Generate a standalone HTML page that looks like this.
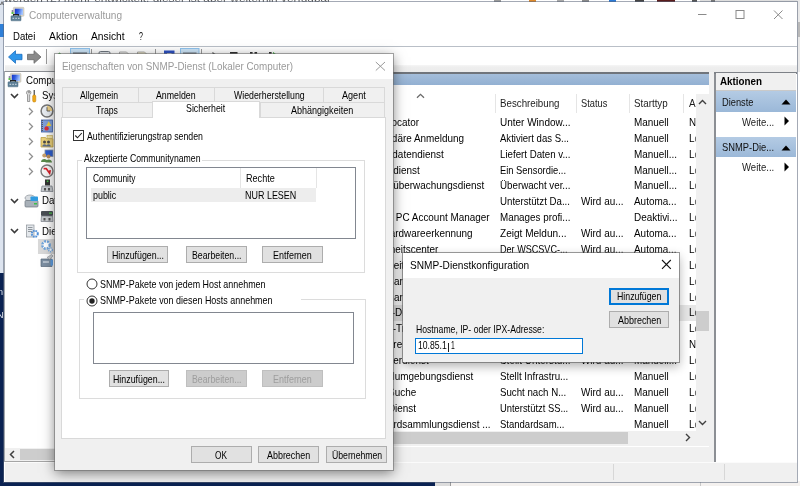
<!DOCTYPE html>
<html lang="de"><head><meta charset="utf-8"><title>Computerverwaltung</title>
<style>
html,body{margin:0;padding:0}
body{width:800px;height:486px;overflow:hidden;position:relative;background:#fff;font-family:"Liberation Sans",sans-serif}
body div{position:absolute}
#desk,#main,#dlg1,#dlg2{left:0;top:0;width:800px;height:486px;overflow:hidden;will-change:transform}
.a{position:absolute;overflow:visible}
.t{position:absolute;white-space:nowrap;line-height:normal}
.clip{overflow:hidden;transform:scaleX(.955);transform-origin:0 0}
</style></head>
<body>
<div id="desk">
<div style="left:0px;top:0px;width:800px;height:486px;background:#ffffff;"></div>
<div style="left:700px;top:0px;width:100px;height:3px;background:#dedede;"></div>
<div style="left:0px;top:0px;width:4px;height:273px;background:#dde4ef;"></div>
<div style="left:0px;top:24px;width:4px;height:13px;background:#2f7fd8;"></div>
<div style="left:0px;top:273px;width:4px;height:213px;background:#0a2252;"></div>
<div style="left:0px;top:481px;width:435px;height:5px;background:#0a2252;"></div>
<div style="left:435px;top:481px;width:15px;height:5px;background:#dcdcdc;"></div>
<div style="left:450px;top:481px;width:1px;height:5px;background:#9a9a9a;"></div>
<div style="left:451px;top:481px;width:349px;height:5px;background:#f4f1ef;"></div>
<div style="left:700px;top:481px;width:1px;height:5px;background:#c8c8c8;"></div>
<div style="left:797px;top:0px;width:3px;height:72px;background:#e9e9e9;"></div>
<div style="left:798px;top:22px;width:2px;height:15px;background:#b9b9b9;"></div>
<span class="t" style="top:-8.50px;font-size:11px;color:#5a5a5a;left:4.00px;transform-origin:0 0;transform:scaleX(1.0762);">werden (2) mehr entwickelt, dieser ist aber weiterhin verfügbar</span>
<div style="left:0px;top:1px;width:4px;height:4px;background:#555;clip-path:polygon(50% 0,100% 100%,70% 100%,50% 40%,30% 100%,0 100%);"></div>
<div style="left:494px;top:0px;width:7px;height:2px;background:#9a9a9a;"></div>
<div style="left:529px;top:0px;width:7px;height:2px;background:#e08a2a;"></div>
<div style="left:557px;top:0px;width:7px;height:2px;background:#a8a8a8;"></div>
<div style="left:582px;top:0px;width:7px;height:2px;background:#8a8a8a;"></div>
<div style="left:609px;top:0px;width:7px;height:2px;background:#2a7ad8;"></div>
<div style="left:635px;top:0px;width:9px;height:2px;background:#444;"></div>
<div style="left:657px;top:0px;width:18px;height:2px;background:#5a1c1c;"></div>
<div style="left:692px;top:0px;width:5px;height:2px;background:#555;"></div>
<div style="left:711px;top:0px;width:4px;height:2px;background:#777;"></div>
<span class="t" style="top:286.50px;font-size:9px;color:#e8ecf4;right:797.00px;transform-origin:100% 0;">Papierkorb n</span>
<span class="t" style="top:309.50px;font-size:9px;color:#e8ecf4;right:796.50px;transform-origin:100% 0;">Chrome N</span>
</div>
<div id="main">
<div style="left:4px;top:2px;width:793px;height:479.5px;background:#ffffff;box-shadow:0 0 0 1px rgba(90,100,120,.55);"></div>
<span class="t" style="top:9.80px;font-size:10.4px;color:#9b9b9b;left:29.00px;transform-origin:0 0;transform:scaleX(0.9700);">Computerverwaltung</span>
<svg class="a" style="left:9px;top:6px" width="16" height="16" viewBox="0 0 16 16"><defs><linearGradient id="g1" x1="0" y1="0" x2="1" y2="0.2"><stop offset="0" stop-color="#1533c4"/><stop offset=".45" stop-color="#2f5be0"/><stop offset="1" stop-color="#a4c6ff"/></linearGradient></defs><rect x="4.300" y="1.300" width="10.700" height="9" rx="1" fill="#d9d5ca" stroke="#bdb9ad" stroke-width=".5"/><rect x="5.800" y="2.700" width="8.200" height="6.200" fill="url(#g1)"/><rect x="2.700" y="4" width="1.600" height="2" fill="#8a86a0"/><rect x="2.500" y="6" width="2" height="2" fill="#58c048"/><path d="M4.600 10v-1.400h4.800v1.400" fill="none" stroke="#222" stroke-width="1.200"/><rect x="2" y="9.800" width="10" height="5" rx=".6" fill="#5f8198" stroke="#4a6a80" stroke-width=".5"/><path d="M3.500 12.300h1.600M6.300 12.300h1.600M9 12.300h1.600" stroke="#bccbd6" stroke-width="1.300"/></svg>
<svg class="a" style="left:690px;top:5px" width="100" height="20" viewBox="0 0 100 20"><g stroke="#8a8a8a" stroke-width="1" fill="none"><path d="M8 9.5h8.5"/><rect x="46" y="5.5" width="8" height="8"/><path d="M84 5.5l8.5 8.5M92.5 5.5l-8.5 8.5"/></g></svg>
<span class="t" style="top:30.80px;font-size:10.4px;color:#000;left:12.50px;transform-origin:0 0;transform:scaleX(0.9190);">Datei</span>
<span class="t" style="top:30.80px;font-size:10.4px;color:#000;left:48.50px;transform-origin:0 0;transform:scaleX(0.9969);">Aktion</span>
<span class="t" style="top:30.80px;font-size:10.4px;color:#000;left:91.20px;transform-origin:0 0;transform:scaleX(0.9860);">Ansicht</span>
<span class="t" style="top:30.80px;font-size:10.4px;color:#000;left:138.70px;transform-origin:0 0;transform:scaleX(0.6746);">?</span>
<div style="left:5px;top:46px;width:792px;height:1px;background:#b9bfc7;"></div>
<div style="left:5px;top:65px;width:792px;height:7px;background:linear-gradient(#f6f6f6,#eeeeee 30%,#ececec);"></div>
<svg class="a" style="left:5px;top:47px" width="300" height="18" viewBox="0 0 300 18">
<path d="M3.5 10l7-6.3v3.6h6.5v5.4h-6.5v3.6z" fill="#2f96ea" stroke="#1c6fc0" stroke-width=".8"/>
<path d="M36 10l-7-6.3v3.6h-6.5v5.4h6.5v3.6z" fill="#8a8a8a" stroke="#6a6a6a" stroke-width=".8"/>
<path d="M41.5 2v15" stroke="#9a9a9a"/>
<path d="M54.5 5.5l-3.5 3h7z" fill="#3aa53a"/><rect x="50" y="7" width="10" height="8" fill="#e9c86a"/>
<rect x="65.5" y="1.5" width="19" height="17" fill="#cce4f7" stroke="#8fc3ee"/><rect x="68" y="5.5" width="14" height="8" fill="#5a6470"/>
<path d="M86.5 2v15" stroke="#9a9a9a"/>
<rect x="94" y="4.5" width="11" height="9" rx="1.5" fill="#dfe3e8" stroke="#6f7780"/>
<path d="M114.5 5h7l3 3v8h-10z" fill="#f4f4f0" stroke="#9a9a9a" stroke-width=".8"/>
<path d="M132.500 5h7l3 3v8h-10z" fill="#f3eccc" stroke="#9a9a9a" stroke-width=".8"/>
<path d="M150.500 2v15" stroke="#9a9a9a"/>
<rect x="159" y="3.500" width="10.500" height="11" fill="#2d50c0"/><rect x="162" y="6" width="4.500" height="3" fill="#dfe8ff"/>
<rect x="175.500" y="1.500" width="18.500" height="17" fill="#cce4f7" stroke="#8fc3ee"/><rect x="178" y="5.500" width="13.500" height="8" fill="#6a7480"/>
<path d="M196.500 2v15" stroke="#9a9a9a"/>
<path d="M207.500 5v8l6-4z" fill="#333"/>
<rect x="225" y="5" width="7.500" height="7" fill="#333"/>
<rect x="245" y="5" width="2.600" height="7" fill="#333"/><rect x="249.500" y="5" width="2.600" height="7" fill="#333"/>
<rect x="264" y="5" width="2.600" height="7" fill="#333"/><path d="M268 5v7l5-3.500z" fill="#2ea52e"/>
</svg>
<div style="left:4px;top:71px;width:389px;height:1px;background:#8c8f94;"></div>
<div style="left:4px;top:71px;width:1px;height:391px;background:#a3a8ae;"></div>
<div style="left:38px;top:238.5px;width:20px;height:15px;background:#d9d9d9;"></div>
<span class="t" style="top:75.00px;font-size:10.4px;color:#000;left:25.80px;transform-origin:0 0;transform:scaleX(0.9300);">Computerverwaltung (Lokal)</span>
<span class="t" style="top:90.05px;font-size:10.4px;color:#000;left:41.80px;transform-origin:0 0;transform:scaleX(0.9300);">System</span>
<span class="t" style="top:195.40px;font-size:10.4px;color:#000;left:41.80px;transform-origin:0 0;transform:scaleX(0.9300);">Datenspeicher</span>
<span class="t" style="top:225.50px;font-size:10.4px;color:#000;left:41.80px;transform-origin:0 0;transform:scaleX(0.9300);">Dienste und Anwendungen</span>
<svg class="a" style="left:10px;top:92.95px" width="9" height="6" viewBox="0 0 9 6"><path d="M1 1l3.500 3.500l3.500-3.500" fill="none" stroke="#3a3a3a" stroke-width="1.600"/></svg>
<svg class="a" style="left:10px;top:198.3px" width="9" height="6" viewBox="0 0 9 6"><path d="M1 1l3.500 3.500l3.500-3.500" fill="none" stroke="#3a3a3a" stroke-width="1.600"/></svg>
<svg class="a" style="left:10px;top:228.4px" width="9" height="6" viewBox="0 0 9 6"><path d="M1 1l3.500 3.500l3.500-3.500" fill="none" stroke="#3a3a3a" stroke-width="1.600"/></svg>
<svg class="a" style="left:28px;top:107.2px" width="6" height="9" viewBox="0 0 6 9"><path d="M1 1l3.500 3.500l-3.500 3.500" fill="none" stroke="#8f8f8f" stroke-width="1.300"/></svg>
<svg class="a" style="left:28px;top:122.25000000000001px" width="6" height="9" viewBox="0 0 6 9"><path d="M1 1l3.500 3.500l-3.500 3.500" fill="none" stroke="#8f8f8f" stroke-width="1.300"/></svg>
<svg class="a" style="left:28px;top:137.29999999999998px" width="6" height="9" viewBox="0 0 6 9"><path d="M1 1l3.500 3.500l-3.500 3.500" fill="none" stroke="#8f8f8f" stroke-width="1.300"/></svg>
<svg class="a" style="left:28px;top:152.35px" width="6" height="9" viewBox="0 0 6 9"><path d="M1 1l3.500 3.500l-3.500 3.500" fill="none" stroke="#8f8f8f" stroke-width="1.300"/></svg>
<svg class="a" style="left:28px;top:167.4px" width="6" height="9" viewBox="0 0 6 9"><path d="M1 1l3.500 3.500l-3.500 3.500" fill="none" stroke="#8f8f8f" stroke-width="1.300"/></svg>
<svg class="a" style="left:6px;top:72px" width="16" height="16" viewBox="0 0 16 16"><defs><linearGradient id="g2" x1="0" y1="0" x2="1" y2="0.2"><stop offset="0" stop-color="#1533c4"/><stop offset=".45" stop-color="#2f5be0"/><stop offset="1" stop-color="#a4c6ff"/></linearGradient></defs><rect x="4.300" y="1.300" width="10.700" height="9" rx="1" fill="#d9d5ca" stroke="#bdb9ad" stroke-width=".5"/><rect x="5.800" y="2.700" width="8.200" height="6.200" fill="url(#g2)"/><rect x="2.700" y="4" width="1.600" height="2" fill="#8a86a0"/><rect x="2.500" y="6" width="2" height="2" fill="#58c048"/><path d="M4.600 10v-1.400h4.800v1.400" fill="none" stroke="#222" stroke-width="1.200"/><rect x="2" y="9.800" width="10" height="5" rx=".6" fill="#5f8198" stroke="#4a6a80" stroke-width=".5"/><path d="M3.500 12.300h1.600M6.300 12.300h1.600M9 12.300h1.600" stroke="#bccbd6" stroke-width="1.300"/></svg>
<svg class="a" style="left:25px;top:88.5px" width="14" height="14" viewBox="0 0 14 14"><path d="M3.500 1.500a2.300 2.300 0 0 0-1 4.200v6.800h2.200v-6.800a2.300 2.300 0 0 0-.2-4.200v2.200h-1z" fill="#d8d8d8" stroke="#777" stroke-width=".7"/><rect x="8.600" y="1" width="1.300" height="5" fill="#555"/><rect x="7.700" y="6" width="3.100" height="7" rx="1.200" fill="#f0a818" stroke="#b87a08" stroke-width=".5"/></svg>
<svg class="a" style="left:40px;top:103.5px" width="14" height="14" viewBox="0 0 14 14"><circle cx="7" cy="7" r="5.900" fill="#e9edf2" stroke="#757575" stroke-width="1.500"/><path d="M7 7V1.800A5.200 5.200 0 0 1 12.200 7z" fill="#f1d38a"/><path d="M7 3.200V7h3" fill="none" stroke="#555" stroke-width=".9"/></svg>
<svg class="a" style="left:40px;top:118.6px" width="14" height="14" viewBox="0 0 14 14"><rect x="1.500" y="1" width="11" height="12" fill="#7f9fdc" stroke="#3f5fa8" stroke-width=".8"/><path d="M2.300 1v12" stroke="#555" stroke-width="1.200" stroke-dasharray="1 1"/><path d="M8.800 2.300l2.600 4.600h-5.200z" fill="#f3d23a"/><circle cx="6.600" cy="9.400" r="2.200" fill="#d8303a"/></svg>
<svg class="a" style="left:40px;top:133.6px" width="14" height="14" viewBox="0 0 14 14"><path d="M1 3.500h4.500l1 1.200h6.500v8.300h-12z" fill="#ecd27a" stroke="#b79a3a" stroke-width=".7"/><rect x="7" y="1.500" width="5.500" height="3" fill="#f6e7a8" stroke="#b79a3a" stroke-width=".5"/><circle cx="4.500" cy="8" r="1.500" fill="#4a4a4a"/><circle cx="8.500" cy="8" r="1.500" fill="#4a4a4a"/><path d="M2.300 12.500c0-3 4.400-3 4.400 0zM6.300 12.500c0-3 4.400-3 4.400 0z" fill="#5d6f8c"/></svg>
<svg class="a" style="left:40px;top:148.7px" width="14" height="14" viewBox="0 0 14 14"><rect x="5" y="1" width="8" height="6.500" fill="#2f5fd0" stroke="#8a96a8" stroke-width=".8"/><circle cx="4.300" cy="6.500" r="2" fill="#caa06a"/><circle cx="8.500" cy="7.500" r="2" fill="#b98d5c"/><path d="M1 13c0-4 6.500-4 6.500 0zM5.500 13.500c0-4 6.500-4 6.500 0z" fill="#5a8a4a"/></svg>
<svg class="a" style="left:40px;top:163.7px" width="14" height="14" viewBox="0 0 14 14"><circle cx="7" cy="7" r="6" fill="#f7f7f7" stroke="#7c7c7c" stroke-width="1.400"/><path d="M3.600 4.600h2.600l3.400 4.600l.6-3" fill="none" stroke="#d8202a" stroke-width="1.700"/></svg>
<svg class="a" style="left:40px;top:178.8px" width="14" height="14" viewBox="0 0 14 14"><rect x="5" y=".500" width="5" height="6" fill="#333"/><rect x="6.800" y="1.500" width="1.600" height="1.600" fill="#4cc04c"/><path d="M2 7h10l1 5.500h-12z" fill="#c8ccd0" stroke="#7a8088" stroke-width=".7"/><rect x="4" y="9" width="2" height="2.500" fill="#555"/><rect x="8" y="9" width="2" height="2.500" fill="#555"/></svg>
<svg class="a" style="left:24px;top:193.8px" width="15" height="14" viewBox="0 0 15 14"><ellipse cx="6" cy="4" rx="5" ry="3" fill="#d8dce0" stroke="#8a9098" stroke-width=".7"/><rect x="1" y="6.500" width="13" height="6.500" rx="1" fill="#a8b0b8" stroke="#6f7780" stroke-width=".7"/><rect x="6.500" y="2.500" width="7.500" height="4.500" rx=".8" fill="#2f9be0"/><rect x="10" y="9" width="3" height="1.500" fill="#3ac04a"/></svg>
<svg class="a" style="left:40px;top:208.9px" width="14" height="14" viewBox="0 0 14 14"><rect x="1" y="2" width="12" height="5" rx="1" fill="#4a4f55"/><rect x="9" y="3.500" width="3" height="1.300" fill="#4cc04c"/><path d="M1.500 7h11l.5 5.500h-12z" fill="#c8ccd0" stroke="#7a8088" stroke-width=".7"/><rect x="3.500" y="9" width="2" height="2.500" fill="#555"/><rect x="8.500" y="9" width="2" height="2.500" fill="#555"/></svg>
<svg class="a" style="left:25px;top:223.9px" width="14" height="14" viewBox="0 0 14 14"><rect x="1.500" y="1" width="7.500" height="12" fill="#e4e8ec" stroke="#8a9098" stroke-width=".7"/><path d="M3 3.500h4.500M3 5.500h4.500M3 7.500h4.500" stroke="#7a8088" stroke-width=".8"/><circle cx="9.800" cy="9.800" r="3" fill="none" stroke="#4f8fd8" stroke-width="2" stroke-dasharray="1.600 .8"/></svg>
<svg class="a" style="left:40px;top:239.0px" width="14" height="14" viewBox="0 0 14 14"><circle cx="6" cy="6" r="3.700" fill="#fff" stroke="#6fa4dc" stroke-width="2.400" stroke-dasharray="2 1"/><circle cx="10.500" cy="10.800" r="1.800" fill="#fff" stroke="#7fb0e4" stroke-width="1.600" stroke-dasharray="1.200 .7"/></svg>
<svg class="a" style="left:40px;top:254.0px" width="14" height="14" viewBox="0 0 14 14"><path d="M1 5h11v7.500h-11z" fill="#7d8fa2" stroke="#56677a" stroke-width=".7"/><path d="M3 8h6" stroke="#d8e0e8" stroke-width="1.200"/><path d="M7 3.500l4.500-3 1.500 1.500-3.500 3.500z" fill="#c8ccd0" stroke="#7a8088" stroke-width=".5"/><path d="M10.500 5.500h2.500v5l-1.250 2-1.250-2z" fill="#5f9fe4"/></svg>
<div style="left:5px;top:448px;width:388px;height:13px;background:#f0f0f0;"></div>
<div style="left:20px;top:449px;width:373px;height:11px;background:#cdcdcd;"></div>
<svg class="a" style="left:8px;top:450px" width="8" height="9" viewBox="0 0 8 9"><path d="M6 1l-3.500 3.500l3.500 3.500" fill="none" stroke="#404040" stroke-width="1.500"/></svg>
<div style="left:5px;top:461px;width:388px;height:1px;background:#a5a5a5;"></div>
<div style="left:393px;top:72px;width:316px;height:1.5px;background:#70757c;"></div>
<div style="left:393px;top:73.5px;width:316px;height:11.5px;background:linear-gradient(#a4bedb,#93b0d2);"></div>
<div style="left:709px;top:72px;width:5px;height:390px;background:#f0f0f0;"></div>
<div style="left:494.5px;top:94px;width:1px;height:19px;background:#e5e5e5;"></div>
<div style="left:575.5px;top:94px;width:1px;height:19px;background:#e5e5e5;"></div>
<div style="left:628.5px;top:94px;width:1px;height:19px;background:#e5e5e5;"></div>
<div style="left:683px;top:94px;width:1px;height:19px;background:#e5e5e5;"></div>
<svg class="a" style="left:416px;top:93px" width="9" height="6" viewBox="0 0 9 6"><path d="M1 4.800l3.500-3.500l3.500 3.500" fill="none" stroke="#6a6a6a" stroke-width="1.300"/></svg>
<span class="t" style="top:97.90px;font-size:10.4px;color:#1c1c1c;left:500.00px;transform-origin:0 0;transform:scaleX(0.9363);">Beschreibung</span>
<span class="t" style="top:97.90px;font-size:10.4px;color:#1c1c1c;left:581.20px;transform-origin:0 0;transform:scaleX(0.8925);">Status</span>
<span class="t" style="top:97.90px;font-size:10.4px;color:#1c1c1c;left:633.80px;transform-origin:0 0;transform:scaleX(0.9410);">Starttyp</span>
<span class="t" style="top:97.90px;font-size:10.4px;color:#1c1c1c;left:688.80px;transform-origin:0 0;transform:scaleX(0.9550);">A</span>
<div style="left:393px;top:305.14px;width:303px;height:15.8px;background:#e6e6e6;"></div>
<span class="t" style="top:117.00px;font-size:10.4px;color:#000;right:381.00px;transform-origin:100% 0;transform:scaleX(0.9550);">RPC-Locator</span>
<span class="t" style="top:117.00px;font-size:10.4px;color:#000;left:500.00px;transform-origin:0 0;transform:scaleX(0.9612);">Unter Window...</span>
<span class="t" style="top:117.00px;font-size:10.4px;color:#000;left:633.80px;transform-origin:0 0;transform:scaleX(0.9550);">Manuell</span>
<span class="t clip" style="left:689px;top:117.00px;width:7px;font-size:10.4px">Ne</span>
<span class="t" style="top:132.87px;font-size:10.4px;color:#000;right:336.00px;transform-origin:100% 0;transform:scaleX(0.9550);">Sekundäre Anmeldung</span>
<span class="t" style="top:132.87px;font-size:10.4px;color:#000;left:500.00px;transform-origin:0 0;transform:scaleX(0.9190);">Aktiviert das S...</span>
<span class="t" style="top:132.87px;font-size:10.4px;color:#000;left:633.80px;transform-origin:0 0;transform:scaleX(0.9550);">Manuell</span>
<span class="t clip" style="left:689px;top:132.87px;width:7px;font-size:10.4px">Lo</span>
<span class="t" style="top:148.74px;font-size:10.4px;color:#000;right:356.00px;transform-origin:100% 0;transform:scaleX(0.9550);">Sensordatendienst</span>
<span class="t" style="top:148.74px;font-size:10.4px;color:#000;left:500.00px;transform-origin:0 0;transform:scaleX(0.9342);">Liefert Daten v...</span>
<span class="t" style="top:148.74px;font-size:10.4px;color:#000;left:633.80px;transform-origin:0 0;transform:scaleX(0.9550);">Manuell...</span>
<span class="t clip" style="left:689px;top:148.74px;width:7px;font-size:10.4px">Lo</span>
<span class="t" style="top:164.61px;font-size:10.4px;color:#000;right:380.70px;transform-origin:100% 0;transform:scaleX(0.9550);">Sensordienst</span>
<span class="t" style="top:164.61px;font-size:10.4px;color:#000;left:500.00px;transform-origin:0 0;transform:scaleX(0.8997);">Ein Sensordie...</span>
<span class="t" style="top:164.61px;font-size:10.4px;color:#000;left:633.80px;transform-origin:0 0;transform:scaleX(0.9550);">Manuell...</span>
<span class="t clip" style="left:689px;top:164.61px;width:7px;font-size:10.4px">Lo</span>
<span class="t" style="top:180.48px;font-size:10.4px;color:#000;right:316.00px;transform-origin:100% 0;transform:scaleX(0.9550);">Sensorüberwachungsdienst</span>
<span class="t" style="top:180.48px;font-size:10.4px;color:#000;left:500.00px;transform-origin:0 0;transform:scaleX(0.9390);">Überwacht ver...</span>
<span class="t" style="top:180.48px;font-size:10.4px;color:#000;left:633.80px;transform-origin:0 0;transform:scaleX(0.9550);">Manuell...</span>
<span class="t clip" style="left:689px;top:180.48px;width:7px;font-size:10.4px">Lo</span>
<span class="t" style="top:196.35px;font-size:10.4px;color:#000;right:408.00px;transform-origin:100% 0;transform:scaleX(0.9550);">Server</span>
<span class="t" style="top:196.35px;font-size:10.4px;color:#000;left:500.00px;transform-origin:0 0;transform:scaleX(0.9324);">Unterstützt Da...</span>
<span class="t" style="top:196.35px;font-size:10.4px;color:#000;left:581.20px;transform-origin:0 0;transform:scaleX(0.9550);">Wird au...</span>
<span class="t" style="top:196.35px;font-size:10.4px;color:#000;left:633.80px;transform-origin:0 0;transform:scaleX(0.9550);">Automa...</span>
<span class="t clip" style="left:689px;top:196.35px;width:7px;font-size:10.4px">Lo</span>
<span class="t" style="top:212.22px;font-size:10.4px;color:#000;right:310.00px;transform-origin:100% 0;transform:scaleX(0.9550);">Shared PC Account Manager</span>
<span class="t" style="top:212.22px;font-size:10.4px;color:#000;left:500.00px;transform-origin:0 0;transform:scaleX(0.9461);">Manages profi...</span>
<span class="t" style="top:212.22px;font-size:10.4px;color:#000;left:633.80px;transform-origin:0 0;transform:scaleX(0.9550);">Deaktivi...</span>
<span class="t clip" style="left:689px;top:212.22px;width:7px;font-size:10.4px">Lo</span>
<span class="t" style="top:228.09px;font-size:10.4px;color:#000;right:327.60px;transform-origin:100% 0;transform:scaleX(0.9550);">Shellhardwareerkennung</span>
<span class="t" style="top:228.09px;font-size:10.4px;color:#000;left:500.00px;transform-origin:0 0;transform:scaleX(0.9675);">Zeigt Meldun...</span>
<span class="t" style="top:228.09px;font-size:10.4px;color:#000;left:581.20px;transform-origin:0 0;transform:scaleX(0.9550);">Wird au...</span>
<span class="t" style="top:228.09px;font-size:10.4px;color:#000;left:633.80px;transform-origin:0 0;transform:scaleX(0.9550);">Automa...</span>
<span class="t clip" style="left:689px;top:228.09px;width:7px;font-size:10.4px">Lo</span>
<span class="t" style="top:243.96px;font-size:10.4px;color:#000;right:361.50px;transform-origin:100% 0;transform:scaleX(0.9550);">Sicherheitscenter</span>
<span class="t" style="top:243.96px;font-size:10.4px;color:#000;left:500.00px;transform-origin:0 0;transform:scaleX(0.8726);">Der WSCSVC-...</span>
<span class="t" style="top:243.96px;font-size:10.4px;color:#000;left:581.20px;transform-origin:0 0;transform:scaleX(0.9550);">Wird au...</span>
<span class="t" style="top:243.96px;font-size:10.4px;color:#000;left:633.80px;transform-origin:0 0;transform:scaleX(0.9550);">Automa...</span>
<span class="t clip" style="left:689px;top:243.96px;width:7px;font-size:10.4px">Lo</span>
<span class="t" style="top:259.83px;font-size:10.4px;color:#000;left:359.75px;transform-origin:0 0;transform:scaleX(0.9550);">Sicherheitskonto-Manager</span>
<span class="t" style="top:259.83px;font-size:10.4px;color:#000;left:500.00px;transform-origin:0 0;transform:scaleX(0.9550);">Beim Start die...</span>
<span class="t" style="top:259.83px;font-size:10.4px;color:#000;left:581.20px;transform-origin:0 0;transform:scaleX(0.9550);">Wird au...</span>
<span class="t" style="top:259.83px;font-size:10.4px;color:#000;left:633.80px;transform-origin:0 0;transform:scaleX(0.9550);">Automa...</span>
<span class="t clip" style="left:689px;top:259.83px;width:7px;font-size:10.4px">Lo</span>
<span class="t" style="top:275.70px;font-size:10.4px;color:#000;left:379.01px;transform-origin:0 0;transform:scaleX(0.9550);">Smartcard</span>
<span class="t" style="top:275.70px;font-size:10.4px;color:#000;left:500.00px;transform-origin:0 0;transform:scaleX(0.9550);">Verwaltet den ...</span>
<span class="t" style="top:275.70px;font-size:10.4px;color:#000;left:633.80px;transform-origin:0 0;transform:scaleX(0.9550);">Deaktivi...</span>
<span class="t clip" style="left:689px;top:275.70px;width:7px;font-size:10.4px">Lo</span>
<span class="t" style="top:291.57px;font-size:10.4px;color:#000;left:379.01px;transform-origin:0 0;transform:scaleX(0.9550);">Smartcard-Entfernungsrichtlinie</span>
<span class="t" style="top:291.57px;font-size:10.4px;color:#000;left:500.00px;transform-origin:0 0;transform:scaleX(0.9550);">Lässt eine Konf...</span>
<span class="t" style="top:291.57px;font-size:10.4px;color:#000;left:633.80px;transform-origin:0 0;transform:scaleX(0.9550);">Manuell</span>
<span class="t clip" style="left:689px;top:291.57px;width:7px;font-size:10.4px">Lo</span>
<span class="t" style="top:307.44px;font-size:10.4px;color:#000;left:363.22px;transform-origin:0 0;transform:scaleX(0.9550);">SNMP-Dienst</span>
<span class="t" style="top:307.44px;font-size:10.4px;color:#000;left:500.00px;transform-origin:0 0;transform:scaleX(0.9550);">Ermöglicht die...</span>
<span class="t" style="top:307.44px;font-size:10.4px;color:#000;left:581.20px;transform-origin:0 0;transform:scaleX(0.9550);">Wird au...</span>
<span class="t" style="top:307.44px;font-size:10.4px;color:#000;left:633.80px;transform-origin:0 0;transform:scaleX(0.9550);">Automa...</span>
<span class="t clip" style="left:689px;top:307.44px;width:7px;font-size:10.4px">Lo</span>
<span class="t" style="top:323.31px;font-size:10.4px;color:#000;left:363.72px;transform-origin:0 0;transform:scaleX(0.9550);">SNMP-Trap</span>
<span class="t" style="top:323.31px;font-size:10.4px;color:#000;left:500.00px;transform-origin:0 0;transform:scaleX(0.9550);">Empfängt Trap...</span>
<span class="t" style="top:323.31px;font-size:10.4px;color:#000;left:633.80px;transform-origin:0 0;transform:scaleX(0.9550);">Manuell</span>
<span class="t clip" style="left:689px;top:323.31px;width:7px;font-size:10.4px">Lo</span>
<span class="t" style="top:339.18px;font-size:10.4px;color:#000;left:362.86px;transform-origin:0 0;transform:scaleX(0.9550);">Software Protection</span>
<span class="t" style="top:339.18px;font-size:10.4px;color:#000;left:500.00px;transform-origin:0 0;transform:scaleX(0.9550);">Ermöglicht das...</span>
<span class="t" style="top:339.18px;font-size:10.4px;color:#000;left:633.80px;transform-origin:0 0;transform:scaleX(0.9550);">Automa...</span>
<span class="t clip" style="left:689px;top:339.18px;width:7px;font-size:10.4px">Ne</span>
<span class="t" style="top:355.05px;font-size:10.4px;color:#000;left:362.65px;transform-origin:0 0;transform:scaleX(0.9550);">Speicherdienst</span>
<span class="t" style="top:355.05px;font-size:10.4px;color:#000;left:500.00px;transform-origin:0 0;transform:scaleX(0.9550);">Stellt Unterstü...</span>
<span class="t" style="top:355.05px;font-size:10.4px;color:#000;left:581.20px;transform-origin:0 0;transform:scaleX(0.9550);">Wird au...</span>
<span class="t" style="top:355.05px;font-size:10.4px;color:#000;left:633.80px;transform-origin:0 0;transform:scaleX(0.9550);">Manuell...</span>
<span class="t clip" style="left:689px;top:355.05px;width:7px;font-size:10.4px">Lo</span>
<span class="t" style="top:370.92px;font-size:10.4px;color:#000;right:326.50px;transform-origin:100% 0;transform:scaleX(0.9550);">Spielumgebungsdienst</span>
<span class="t" style="top:370.92px;font-size:10.4px;color:#000;left:500.00px;transform-origin:0 0;transform:scaleX(0.9373);">Stellt Infrastru...</span>
<span class="t" style="top:370.92px;font-size:10.4px;color:#000;left:633.80px;transform-origin:0 0;transform:scaleX(0.9550);">Manuell</span>
<span class="t clip" style="left:689px;top:370.92px;width:7px;font-size:10.4px">Lo</span>
<span class="t" style="top:386.79px;font-size:10.4px;color:#000;right:383.50px;transform-origin:100% 0;transform:scaleX(0.9550);">SSDP-Suche</span>
<span class="t" style="top:386.79px;font-size:10.4px;color:#000;left:500.00px;transform-origin:0 0;transform:scaleX(0.9318);">Sucht nach N...</span>
<span class="t" style="top:386.79px;font-size:10.4px;color:#000;left:581.20px;transform-origin:0 0;transform:scaleX(0.9550);">Wird au...</span>
<span class="t" style="top:386.79px;font-size:10.4px;color:#000;left:633.80px;transform-origin:0 0;transform:scaleX(0.9550);">Manuell</span>
<span class="t clip" style="left:689px;top:386.79px;width:7px;font-size:10.4px">Lo</span>
<span class="t" style="top:402.66px;font-size:10.4px;color:#000;right:384.00px;transform-origin:100% 0;transform:scaleX(0.9550);">SSTP-Dienst</span>
<span class="t" style="top:402.66px;font-size:10.4px;color:#000;left:500.00px;transform-origin:0 0;transform:scaleX(0.9014);">Unterstützt SS...</span>
<span class="t" style="top:402.66px;font-size:10.4px;color:#000;left:581.20px;transform-origin:0 0;transform:scaleX(0.9550);">Wird au...</span>
<span class="t" style="top:402.66px;font-size:10.4px;color:#000;left:633.80px;transform-origin:0 0;transform:scaleX(0.9550);">Manuell</span>
<span class="t clip" style="left:689px;top:402.66px;width:7px;font-size:10.4px">Lo</span>
<span class="t" style="top:418.53px;font-size:10.4px;color:#000;right:309.50px;transform-origin:100% 0;transform:scaleX(0.9550);">Standardsammlungsdienst ...</span>
<span class="t" style="top:418.53px;font-size:10.4px;color:#000;left:500.00px;transform-origin:0 0;transform:scaleX(0.9153);">Standardsam...</span>
<span class="t" style="top:418.53px;font-size:10.4px;color:#000;left:633.80px;transform-origin:0 0;transform:scaleX(0.9550);">Manuell</span>
<span class="t clip" style="left:689px;top:418.53px;width:7px;font-size:10.4px">Lo</span>
<div style="left:696px;top:93.5px;width:13px;height:337.5px;background:#f0f0f0;"></div>
<div style="left:696px;top:310.5px;width:13px;height:20px;background:#cdcdcd;"></div>
<svg class="a" style="left:698px;top:98.5px" width="9" height="6" viewBox="0 0 9 6"><path d="M1 5l3.500-3.500l3.500 3.500" fill="none" stroke="#404040" stroke-width="1.400"/></svg>
<svg class="a" style="left:698px;top:420px" width="9" height="6" viewBox="0 0 9 6"><path d="M1 1l3.500 3.500l3.500-3.500" fill="none" stroke="#404040" stroke-width="1.400"/></svg>
<div style="left:393px;top:431px;width:316px;height:15px;background:#f0f0f0;"></div>
<div style="left:393px;top:432px;width:234.5px;height:12px;background:#cdcdcd;"></div>
<svg class="a" style="left:685px;top:433px" width="6" height="9" viewBox="0 0 6 9"><path d="M1 1l3.500 3.500l-3.500 3.500" fill="none" stroke="#404040" stroke-width="1.400"/></svg>
<div style="left:393px;top:446.5px;width:318px;height:1px;background:#a8a8a8;"></div>
<div style="left:393px;top:447px;width:321px;height:15px;background:#f0f0f0;"></div>
<div style="left:714px;top:72px;width:83px;height:390px;background:#ffffff;"></div>
<div style="left:714px;top:72px;width:2px;height:390px;background:#8c8f94;"></div>
<div style="left:714px;top:72px;width:83px;height:1.5px;background:#7d8187;"></div>
<div style="left:716px;top:73px;width:80px;height:16.5px;background:#f0f0f0;"></div>
<div style="left:716px;top:89.5px;width:80px;height:1px;background:#c9c9c9;"></div>
<span class="t" style="top:76.00px;font-size:10.4px;color:#000;font-weight:700;left:720.00px;transform-origin:0 0;transform:scaleX(0.9448);">Aktionen</span>
<div style="left:716px;top:91px;width:80px;height:21px;background:linear-gradient(#b4cbe4,#9bb8d8);"></div>
<div style="left:716px;top:136.5px;width:80px;height:20.5px;background:linear-gradient(#b4cbe4,#9bb8d8);"></div>
<span class="t" style="top:97.20px;font-size:10.4px;color:#111;left:722.00px;transform-origin:0 0;transform:scaleX(0.8940);">Dienste</span>
<span class="t" style="top:141.70px;font-size:10.4px;color:#111;left:722.00px;transform-origin:0 0;transform:scaleX(0.9007);">SNMP-Die...</span>
<span class="t" style="top:116.80px;font-size:10.4px;color:#1c1c1c;left:741.80px;transform-origin:0 0;transform:scaleX(0.9188);">Weite...</span>
<span class="t" style="top:162.00px;font-size:10.4px;color:#1c1c1c;left:741.80px;transform-origin:0 0;transform:scaleX(0.9188);">Weite...</span>
<svg class="a" style="left:781px;top:98px" width="10" height="8" viewBox="0 0 10 8"><path d="M0.500 6.500h9l-4.500-5z" fill="#000"/></svg>
<svg class="a" style="left:781px;top:144px" width="10" height="8" viewBox="0 0 10 8"><path d="M0.500 6.500h9l-4.500-5z" fill="#000"/></svg>
<svg class="a" style="left:784px;top:116px" width="6" height="10" viewBox="0 0 6 10"><path d="M.5 .5v9l4.500-4.500z" fill="#000"/></svg>
<svg class="a" style="left:784px;top:161.500px" width="6" height="10" viewBox="0 0 6 10"><path d="M.5 .5v9l4.500-4.500z" fill="#000"/></svg>
<div style="left:5px;top:462px;width:792px;height:19.5px;background:#f0f0f0;"></div>
<div style="left:5px;top:462px;width:792px;height:1px;background:#fbfbfb;"></div>
<div style="left:612.5px;top:464px;width:1px;height:16px;background:#d7d7d7;"></div>
<div style="left:724px;top:464px;width:1px;height:16px;background:#d7d7d7;"></div>
</div>
<div id="dlg1">
<div style="left:55px;top:54px;width:338px;height:416px;background:#f0f0f0;box-shadow:0 0 0 1px rgba(110,110,110,.6),0 3px 12px rgba(0,0,0,.5);"></div>
<div style="left:55px;top:54px;width:338px;height:25px;background:#ffffff;"></div>
<span class="t" style="top:61.40px;font-size:10.4px;color:#9a9a9a;left:62.00px;transform-origin:0 0;transform:scaleX(0.9478);">Eigenschaften von SNMP-Dienst (Lokaler Computer)</span>
<svg class="a" style="left:374px;top:60px" width="13" height="13" viewBox="0 0 13 13"><path d="M1.800 2l9.200 8.500M11 2l-9.200 8.500" stroke="#9a9a9a" stroke-width="1" fill="none"/></svg>
<div style="left:60.5px;top:117px;width:325.5px;height:321.5px;background:#ffffff;border:1px solid #d9d9d9;box-sizing:border-box;"></div>
<div style="left:62px;top:87px;width:76.5px;height:16px;background:#f0f0f0;border:1px solid #d9d9d9;box-sizing:border-box;"></div>
<div style="left:137.5px;top:87px;width:77.5px;height:16px;background:#f0f0f0;border:1px solid #d9d9d9;box-sizing:border-box;"></div>
<div style="left:214px;top:87px;width:110px;height:16px;background:#f0f0f0;border:1px solid #d9d9d9;box-sizing:border-box;"></div>
<div style="left:323px;top:87px;width:61.69999999999999px;height:16px;background:#f0f0f0;border:1px solid #d9d9d9;box-sizing:border-box;"></div>
<div style="left:62px;top:102px;width:91px;height:16px;background:#f0f0f0;border:1px solid #d9d9d9;box-sizing:border-box;"></div>
<div style="left:259.5px;top:102px;width:125.19999999999999px;height:16px;background:#f0f0f0;border:1px solid #d9d9d9;box-sizing:border-box;"></div>
<div style="left:151.5px;top:100.5px;width:108.5px;height:17.799999999999997px;background:#ffffff;border:1px solid #d9d9d9;box-sizing:border-box;border-bottom:none;"></div>
<span class="t" style="top:90.00px;font-size:10.4px;color:#000;left:80.00px;transform-origin:0 0;transform:scaleX(0.8326);">Allgemein</span>
<span class="t" style="top:90.00px;font-size:10.4px;color:#000;left:156.20px;transform-origin:0 0;transform:scaleX(0.8462);">Anmelden</span>
<span class="t" style="top:90.00px;font-size:10.4px;color:#000;left:233.80px;transform-origin:0 0;transform:scaleX(0.8442);">Wiederherstellung</span>
<span class="t" style="top:90.00px;font-size:10.4px;color:#000;left:341.80px;transform-origin:0 0;transform:scaleX(0.8727);">Agent</span>
<span class="t" style="top:105.20px;font-size:10.4px;color:#000;left:95.50px;transform-origin:0 0;transform:scaleX(0.8401);">Traps</span>
<span class="t" style="top:105.20px;font-size:10.4px;color:#000;left:290.80px;transform-origin:0 0;transform:scaleX(0.8682);">Abhängigkeiten</span>
<span class="t" style="top:103.20px;font-size:10.4px;color:#000;left:185.80px;transform-origin:0 0;transform:scaleX(0.8481);">Sicherheit</span>
<div style="left:73px;top:130px;width:11px;height:11px;background:#ffffff;border:1px solid #333;box-sizing:border-box;"></div>
<svg class="a" style="left:73px;top:130px" width="11" height="11" viewBox="0 0 11 11"><path d="M2.300 5.500l2.200 2.300l4.300-4.800" fill="none" stroke="#222" stroke-width="1.100"/></svg>
<span class="t" style="top:130.60px;font-size:10.4px;color:#000;left:87.00px;transform-origin:0 0;transform:scaleX(0.8437);">Authentifizierungstrap senden</span>
<div style="left:76.5px;top:159.5px;width:288px;height:113px;border:1px solid #dcdcdc;box-sizing:border-box;"></div>
<div style="left:81.5px;top:155px;width:120.5px;height:9px;background:#ffffff;"></div>
<span class="t" style="top:153.30px;font-size:10.4px;color:#000;left:83.50px;transform-origin:0 0;transform:scaleX(0.8370);">Akzeptierte Communitynamen</span>
<div style="left:86px;top:166.5px;width:269.5px;height:72px;background:#ffffff;border:1px solid #828790;box-sizing:border-box;"></div>
<div style="left:239.5px;top:167.5px;width:1px;height:20.5px;background:#e5e5e5;"></div>
<div style="left:315.5px;top:167.5px;width:1px;height:20.5px;background:#e5e5e5;"></div>
<div style="left:91px;top:188px;width:224.5px;height:14px;background:#ededed;"></div>
<span class="t" style="top:172.80px;font-size:10.4px;color:#000;left:93.00px;transform-origin:0 0;transform:scaleX(0.8088);">Community</span>
<span class="t" style="top:172.80px;font-size:10.4px;color:#000;left:245.50px;transform-origin:0 0;transform:scaleX(0.8744);">Rechte</span>
<span class="t" style="top:189.80px;font-size:10.4px;color:#000;left:93.00px;transform-origin:0 0;transform:scaleX(0.8580);">public</span>
<span class="t" style="top:189.80px;font-size:10.4px;color:#000;left:245.00px;transform-origin:0 0;transform:scaleX(0.8624);">NUR LESEN</span>
<div style="left:107px;top:246px;width:61px;height:17px;background:#e1e1e1;border:1px solid #adadad;box-sizing:border-box;"></div>
<span class="t" style="top:249.90px;font-size:10.4px;color:#000;left:111.80px;transform-origin:0 0;transform:scaleX(0.8492);">Hinzufügen...</span>
<div style="left:186px;top:246px;width:61px;height:17px;background:#e1e1e1;border:1px solid #adadad;box-sizing:border-box;"></div>
<span class="t" style="top:249.90px;font-size:10.4px;color:#000;left:191.80px;transform-origin:0 0;transform:scaleX(0.8401);">Bearbeiten...</span>
<div style="left:262px;top:246px;width:60.5px;height:17px;background:#e1e1e1;border:1px solid #adadad;box-sizing:border-box;"></div>
<span class="t" style="top:249.90px;font-size:10.4px;color:#000;left:272.50px;transform-origin:0 0;transform:scaleX(0.8610);">Entfernen</span>
<div style="left:78.5px;top:299.4px;width:287.3px;height:100.1px;border:1px solid #dcdcdc;box-sizing:border-box;"></div>
<div style="left:84px;top:296px;width:217px;height:9px;background:#ffffff;"></div>
<svg class="a" style="left:85.5px;top:278.3px" width="12" height="12" viewBox="0 0 12 12"><circle cx="6" cy="6" r="5" fill="#fff" stroke="#333" stroke-width="1"/></svg>
<svg class="a" style="left:85.5px;top:294.8px" width="12" height="12" viewBox="0 0 12 12"><circle cx="6" cy="6" r="5" fill="#fff" stroke="#333" stroke-width="1"/><circle cx="6" cy="6" r="2.700" fill="#222"/></svg>
<span class="t" style="top:278.60px;font-size:10.4px;color:#000;left:100.00px;transform-origin:0 0;transform:scaleX(0.8579);">SNMP-Pakete von jedem Host annehmen</span>
<span class="t" style="top:295.40px;font-size:10.4px;color:#000;left:100.00px;transform-origin:0 0;transform:scaleX(0.8607);">SNMP-Pakete von diesen Hosts annehmen</span>
<div style="left:93px;top:312px;width:261px;height:51.5px;background:#ffffff;border:1px solid #828790;box-sizing:border-box;"></div>
<div style="left:108.7px;top:370px;width:60.8px;height:16.80000000000001px;background:#e1e1e1;border:1px solid #adadad;box-sizing:border-box;"></div>
<span class="t" style="top:373.80px;font-size:10.4px;color:#000;left:113.30px;transform-origin:0 0;transform:scaleX(0.8492);">Hinzufügen...</span>
<div style="left:186px;top:370px;width:61px;height:16.80000000000001px;background:#cccccc;border:1px solid #bfbfbf;box-sizing:border-box;"></div>
<span class="t" style="top:373.80px;font-size:10.4px;color:#9d9d9d;left:191.80px;transform-origin:0 0;transform:scaleX(0.8401);">Bearbeiten...</span>
<div style="left:262px;top:370px;width:60.5px;height:16.80000000000001px;background:#cccccc;border:1px solid #bfbfbf;box-sizing:border-box;"></div>
<span class="t" style="top:373.80px;font-size:10.4px;color:#9d9d9d;left:272.50px;transform-origin:0 0;transform:scaleX(0.8610);">Entfernen</span>
<div style="left:190.7px;top:446.2px;width:61.10000000000002px;height:16.80000000000001px;background:#e1e1e1;border:1px solid #adadad;box-sizing:border-box;"></div>
<span class="t" style="top:449.60px;font-size:10.4px;color:#000;left:215.00px;transform-origin:0 0;transform:scaleX(0.7992);">OK</span>
<div style="left:258.2px;top:446.2px;width:60.60000000000002px;height:16.80000000000001px;background:#e1e1e1;border:1px solid #adadad;box-sizing:border-box;"></div>
<span class="t" style="top:449.60px;font-size:10.4px;color:#000;left:266.80px;transform-origin:0 0;transform:scaleX(0.8594);">Abbrechen</span>
<div style="left:326.2px;top:446.2px;width:60.60000000000002px;height:16.80000000000001px;background:#e1e1e1;border:1px solid #adadad;box-sizing:border-box;"></div>
<span class="t" style="top:449.60px;font-size:10.4px;color:#000;left:331.80px;transform-origin:0 0;transform:scaleX(0.8356);">Übernehmen</span>
</div>
<div id="dlg2">
<div style="left:403px;top:253px;width:276px;height:108.5px;background:#f0f0f0;box-shadow:0 0 0 1px rgba(90,90,90,.6),0 4px 10px rgba(0,0,0,.32);"></div>
<div style="left:403px;top:253px;width:276px;height:24.5px;background:#ffffff;"></div>
<span class="t" style="top:259.80px;font-size:10.4px;color:#000;left:409.60px;transform-origin:0 0;transform:scaleX(0.9736);">SNMP-Dienstkonfiguration</span>
<svg class="a" style="left:660px;top:258px" width="13" height="13" viewBox="0 0 13 13"><path d="M2 2l8.800 8.800M10.800 2l-8.800 8.800" stroke="#111" stroke-width="1.100" fill="none"/></svg>
<div style="left:608.7px;top:288px;width:60.799999999999955px;height:17px;background:#e1e1e1;border:2px solid #0078d7;box-sizing:border-box;"></div>
<span class="t" style="top:291.10px;font-size:10.4px;color:#000;left:617.00px;transform-origin:0 0;transform:scaleX(0.8426);">Hinzufügen</span>
<div style="left:608.7px;top:311.2px;width:60.799999999999955px;height:17.0px;background:#e1e1e1;border:1px solid #adadad;box-sizing:border-box;"></div>
<span class="t" style="top:314.90px;font-size:10.4px;color:#000;left:617.50px;transform-origin:0 0;transform:scaleX(0.8614);">Abbrechen</span>
<span class="t" style="top:324.00px;font-size:10.4px;color:#000;left:415.50px;transform-origin:0 0;transform:scaleX(0.8320);">Hostname, IP- oder IPX-Adresse:</span>
<div style="left:414.5px;top:338.2px;width:168px;height:16px;background:#ffffff;border:1px solid #0078d7;box-sizing:border-box;"></div>
<span class="t" style="top:340.30px;font-size:10.4px;color:#000;left:417.50px;transform-origin:0 0;transform:scaleX(0.8306);">10.85.1</span>
<div style="left:448px;top:342.5px;width:1px;height:9px;background:#222;"></div>
<span class="t" style="top:340.30px;font-size:10.4px;color:#000;left:451.20px;transform-origin:0 0;transform:scaleX(0.6573);">1</span>
</div>
</body></html>
